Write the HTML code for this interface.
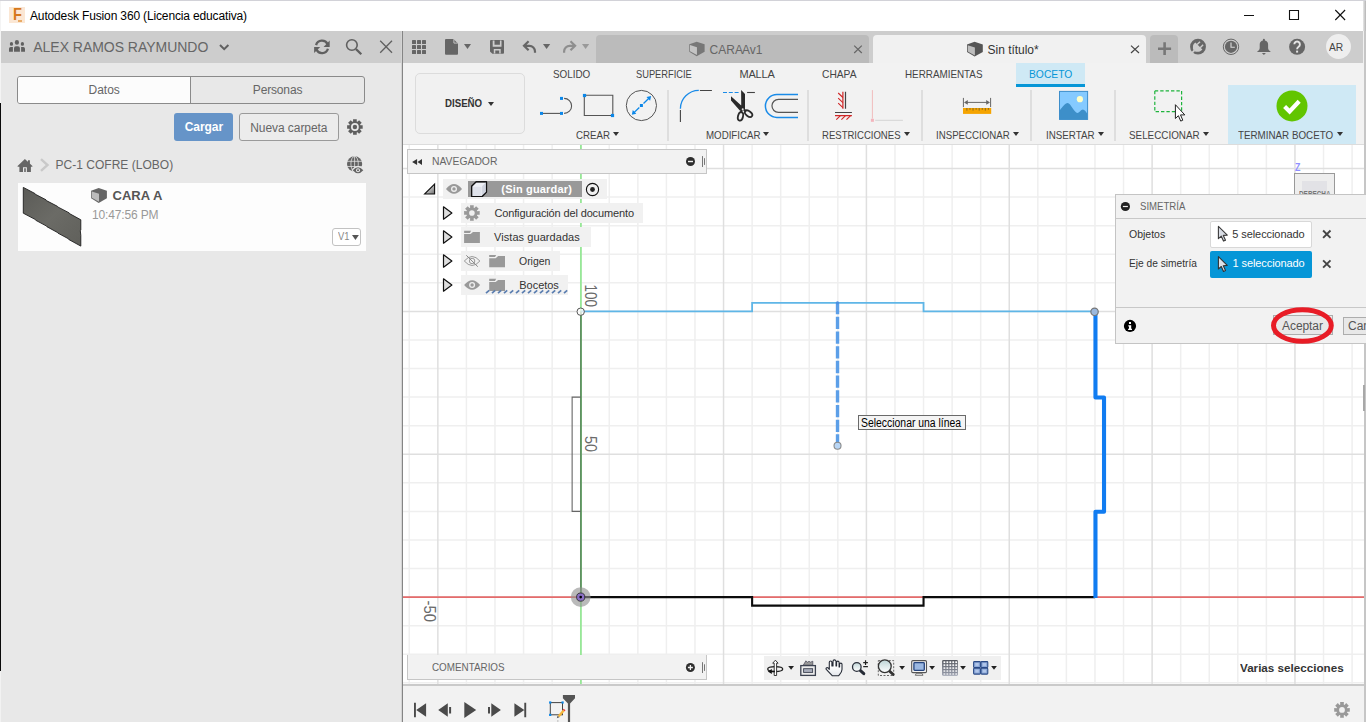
<!DOCTYPE html>
<html><head><meta charset="utf-8"><title>Autodesk Fusion 360 (Licencia educativa)</title>
<style>
*{box-sizing:border-box;margin:0;padding:0}
html,body{width:1366px;height:722px;overflow:hidden;background:#fff;font-family:"Liberation Sans",sans-serif;color:#444}
#root{position:relative;width:1366px;height:722px;overflow:hidden}
#root div,#root span,#root svg{position:absolute}
.t{white-space:nowrap;line-height:1}
#title{left:0;top:0;width:1366px;height:31px;background:#fff}
#lp{left:0;top:31px;width:402px;height:691px;background:#e8e8e8}
#lph{left:0;top:31px;width:402px;height:32px;background:#cdcdcd}
#vdiv{left:401px;top:31px;width:2px;height:691px;background:linear-gradient(90deg,#d4d4d4 50%,#858585 50%)}
#tb{left:403px;top:31px;width:963px;height:32px;background:#cdcdcd}
#rib{left:403px;top:63px;width:963px;height:82px;background:#f2f2f2;border-bottom:1px solid #dcdcdc}
#cv{left:403px;top:145px;width:963px;height:539px;background:#fff;overflow:hidden}
#tl{left:403px;top:684px;width:963px;height:38px;background:#f2f2f2;border-top:2px solid #cacaca}
.sep{width:2px;background:#dedede;top:89.5px;height:51px}
.navrow{background:#f1f1f1;height:20px}
</style></head><body>
<div id="root">
<div id="title"></div><span class="t" style="left:30.00px;top:10.34px;font-size:12px;color:#000;letter-spacing:-0.148px;">Autodesk Fusion 360 (Licencia educativa)</span><div id="lp"></div><div id="lph"></div><span class="t" style="left:33.30px;top:40.15px;font-size:14px;color:#666;letter-spacing:-0.031px;">ALEX RAMOS RAYMUNDO</span><div style="left:17px;top:76px;width:348px;height:28px;border:1px solid #8a8a8a;border-radius:3px;background:#e8e8e8"></div><div style="left:18px;top:77px;width:172px;height:26px;background:#fcfcfc;border-radius:2px 0 0 2px"></div><div style="left:190px;top:77px;width:1px;height:26px;background:#8a8a8a"></div><span class="t" style="left:88.50px;top:83.64px;font-size:12px;color:#666;">Datos</span><span class="t" style="left:252.80px;top:83.64px;font-size:12px;color:#666;letter-spacing:-0.156px;">Personas</span><div style="left:174px;top:113px;width:59px;height:28px;background:#6694c8;border-radius:3px"></div><span class="t" style="left:184.70px;top:121.14px;font-size:12px;color:#fff;font-weight:bold;letter-spacing:-0.057px;">Cargar</span><div style="left:239px;top:113px;width:100px;height:28px;background:#ececec;border:1px solid #9a9a9a;border-radius:3px"></div><span class="t" style="left:250.20px;top:121.84px;font-size:12px;color:#666;letter-spacing:-0.062px;">Nueva carpeta</span><span class="t" style="left:55.50px;top:158.64px;font-size:12px;color:#666;letter-spacing:0.022px;">PC-1 COFRE (LOBO)</span><div style="left:18px;top:183px;width:348px;height:68px;background:#fdfdfd"></div><span class="t" style="left:112.50px;top:188.50px;font-size:13px;color:#555;font-weight:bold;letter-spacing:0.042px;">CARA A</span><span class="t" style="left:92.00px;top:209.24px;font-size:12px;color:#999;letter-spacing:-0.144px;">10:47:56 PM</span><div style="left:332px;top:228px;width:29px;height:18px;background:#fff;border:1px solid #c2c2c2;border-radius:3px"></div><span class="t" style="left:337.60px;top:231.53px;font-size:10px;color:#888;transform:scaleX(0.9402);transform-origin:0 50%;">V1</span><div id="vdiv"></div><div id="tb"></div><div style="left:596px;top:35px;width:273px;height:28px;background:#bbb;border-radius:4px 4px 0 0"></div><div style="left:873px;top:35px;width:273px;height:28px;background:#f1f1f1;border-radius:4px 4px 0 0"></div><div style="left:1150px;top:35px;width:28px;height:28px;background:#bbb;border-radius:4px 4px 0 0"></div><span class="t" style="left:709.60px;top:44.34px;font-size:12px;color:#666;word-spacing:-2.9px;">CARA A v1</span><span class="t" style="left:987.60px;top:44.34px;font-size:12px;color:#333;letter-spacing:-0.036px;">Sin título*</span><div style="left:1325.6px;top:34.4px;width:25px;height:25px;border-radius:50%;background:#eeeeee"></div><span class="t" style="left:1328.90px;top:41.59px;font-size:11px;color:#444;transform:scaleX(0.9292);transform-origin:0 50%;">AR</span><div style="left:1363px;top:31px;width:1px;height:32px;background:#f0f0f0"></div><div id="rib"></div><div style="left:1016px;top:63px;width:69px;height:24px;background:#cfe9f5"></div><div style="left:1016px;top:84px;width:69px;height:3px;background:#0696d7"></div><div style="left:1228px;top:85px;width:128px;height:59px;background:#cfe9f5"></div><div style="left:415px;top:73px;width:110px;height:61px;border:1px solid #dcdcdc;border-radius:5px;background:#f1f1f1"></div><span class="t" style="left:445.40px;top:97.79px;font-size:11px;color:#333;font-weight:bold;transform:scaleX(0.8797);transform-origin:0 50%;">DISEÑO</span><span class="t" style="left:553.20px;top:68.69px;font-size:11px;color:#444;transform:scaleX(0.8974);transform-origin:0 50%;">SOLIDO</span><span class="t" style="left:636.00px;top:68.69px;font-size:11px;color:#444;transform:scaleX(0.8453);transform-origin:0 50%;">SUPERFICIE</span><span class="t" style="left:739.50px;top:68.69px;font-size:11px;color:#444;letter-spacing:-0.193px;">MALLA</span><span class="t" style="left:822.30px;top:68.69px;font-size:11px;color:#444;transform:scaleX(0.9303);transform-origin:0 50%;">CHAPA</span><span class="t" style="left:905.10px;top:68.69px;font-size:11px;color:#444;transform:scaleX(0.8951);transform-origin:0 50%;">HERRAMIENTAS</span><span class="t" style="left:1028.50px;top:68.69px;font-size:11px;color:#0696d7;transform:scaleX(0.9362);transform-origin:0 50%;">BOCETO</span><span class="t" style="left:575.60px;top:129.59px;font-size:11px;color:#444;transform:scaleX(0.8830);transform-origin:0 50%;">CREAR</span><svg style="left:612.8px;top:131.6px" width="6" height="4" viewBox="0 0 6 4"><path d="M0 0h6L3 4z" fill="#333"/></svg><span class="t" style="left:705.50px;top:129.59px;font-size:11px;color:#444;transform:scaleX(0.8830);transform-origin:0 50%;">MODIFICAR</span><svg style="left:763.2px;top:131.6px" width="6" height="4" viewBox="0 0 6 4"><path d="M0 0h6L3 4z" fill="#333"/></svg><span class="t" style="left:822.30px;top:129.59px;font-size:11px;color:#444;transform:scaleX(0.8678);transform-origin:0 50%;">RESTRICCIONES</span><svg style="left:904.0px;top:131.6px" width="6" height="4" viewBox="0 0 6 4"><path d="M0 0h6L3 4z" fill="#333"/></svg><span class="t" style="left:936.30px;top:129.59px;font-size:11px;color:#444;transform:scaleX(0.8801);transform-origin:0 50%;">INSPECCIONAR</span><svg style="left:1013.2px;top:131.6px" width="6" height="4" viewBox="0 0 6 4"><path d="M0 0h6L3 4z" fill="#333"/></svg><span class="t" style="left:1046.10px;top:129.59px;font-size:11px;color:#444;transform:scaleX(0.8901);transform-origin:0 50%;">INSERTAR</span><svg style="left:1097.9px;top:131.6px" width="6" height="4" viewBox="0 0 6 4"><path d="M0 0h6L3 4z" fill="#333"/></svg><span class="t" style="left:1129.20px;top:129.59px;font-size:11px;color:#444;transform:scaleX(0.8953);transform-origin:0 50%;">SELECCIONAR</span><svg style="left:1203.0px;top:131.6px" width="6" height="4" viewBox="0 0 6 4"><path d="M0 0h6L3 4z" fill="#333"/></svg><span class="t" style="left:1238.30px;top:129.59px;font-size:11px;color:#444;transform:scaleX(0.8909);transform-origin:0 50%;">TERMINAR BOCETO</span><svg style="left:1336.6px;top:131.6px" width="6" height="4" viewBox="0 0 6 4"><path d="M0 0h6L3 4z" fill="#333"/></svg><svg style="left:487.9px;top:101.6px" width="6" height="4" viewBox="0 0 6 4"><path d="M0 0h6L3 4z" fill="#333"/></svg><div class="sep" style="left:666.8px"></div><div class="sep" style="left:806.6px"></div><div class="sep" style="left:920.8px"></div><div class="sep" style="left:1029.8px"></div><div class="sep" style="left:1113.8px"></div><div id="cv"><svg style="left:0;top:-1px" width="963" height="542" viewBox="403 144 963 542"><path d="M380.71 144V686M409.28 144V686M466.42 144V686M494.99 144V686M523.56 144V686M552.13 144V686M609.27 144V686M637.84 144V686M666.41 144V686M694.98 144V686M752.12 144V686M780.69 144V686M809.26 144V686M837.83 144V686M894.97 144V686M923.54 144V686M952.11 144V686M980.68 144V686M1037.82 144V686M1066.39 144V686M1094.96 144V686M1123.53 144V686M1180.67 144V686M1209.24 144V686M1237.81 144V686M1266.38 144V686M1323.52 144V686M1352.09 144V686M403 139.98H1366M403 197.12H1366M403 225.69H1366M403 254.26H1366M403 282.83H1366M403 339.97H1366M403 368.54H1366M403 397.11H1366M403 425.68H1366M403 482.82H1366M403 511.39H1366M403 539.96H1366M403 568.53H1366M403 625.67H1366M403 654.24H1366M403 682.81H1366" stroke="#efefef" stroke-width="1.5" fill="none"/><path d="M437.85 144V686M580.7 144V686M723.55 144V686M866.4 144V686M1009.25 144V686M1152.1 144V686M1294.95 144V686M403 168.55H1366M403 311.4H1366M403 454.25H1366M403 597.1H1366" stroke="#dfdfdf" stroke-width="1.5" fill="none"/><path d="M403 597.1H1364" stroke="#e56b6b" stroke-width="1.7" fill="none"/><path d="M580.9000000000001 144V686" stroke="#97e897" stroke-width="1.8" fill="none"/><path d="M580.7 311.4H752.1200000000001V302.829H923.5400000000001V311.4H1094.96" stroke="#5fb6e7" stroke-width="1.8" fill="none"/><path d="M580.9000000000001 311.4V597.1" stroke="#5f9161" stroke-width="1.8" fill="none"/><path d="M580.7 397.11H572.129V511.39H580.7" stroke="#666" stroke-width="1.1" fill="none"/><path d="M580.7 597.1H752.1200000000001V605.671H923.5400000000001V597.1H1094.96" stroke="#0c0c0c" stroke-width="2.1" fill="none" stroke-linejoin="miter"/><path d="M1095.46 311.4V397.51H1104.031V511.78999999999996H1095.46V598.1" stroke="#117cf1" stroke-width="4.1" fill="none" stroke-linejoin="round"/><path d="M837.5300000000001 302.029V445.679" stroke="#5c9fe8" stroke-width="3.4" fill="none" stroke-dasharray="12.3 2.4" stroke-linecap="butt"/><circle cx="837.5300000000001" cy="302.829" r="1.7" fill="#4a90e2"/><circle cx="837.5300000000001" cy="445.7" r="3.5" fill="#b9d6f5" stroke="#8a8a8a" stroke-width="1.1"/><circle cx="580.7" cy="311.7" r="3.7" fill="#fff" fill-opacity="0.75" stroke="#555" stroke-width="1"/><circle cx="1094.56" cy="311.79999999999995" r="3.7" fill="#9bb8dd" stroke="#777" stroke-width="1.2"/><circle cx="580.7" cy="597.1" r="9.9" fill="#8f8f8f" fill-opacity="0.62"/><circle cx="580.7" cy="597.1" r="4.1" fill="#8a6fc4" stroke="#222" stroke-width="0.8"/><circle cx="580.7" cy="597.1" r="1.3" fill="#000"/><text transform="translate(585.3,284.6) rotate(90)" font-size="16.5" fill="#6a6a6a" textLength="22.4" lengthAdjust="spacingAndGlyphs" style="font-family:'Liberation Sans',sans-serif">100</text><text transform="translate(585,435.9) rotate(90)" font-size="16.5" fill="#6a6a6a" textLength="16" lengthAdjust="spacingAndGlyphs" style="font-family:'Liberation Sans',sans-serif">50</text><text transform="translate(423.6,600.6) rotate(90)" font-size="16.5" fill="#6a6a6a" textLength="21.4" lengthAdjust="spacingAndGlyphs" style="font-family:'Liberation Sans',sans-serif">-50</text></svg><div style="left:-403px;top:-145px;width:1366px;height:722px"><div style="left:407px;top:149px;width:300px;height:25px;background:#f2f2f2;border:1px solid #c6c6c6"></div><span class="t" style="left:432.40px;top:155.59px;font-size:11px;color:#666;transform:scaleX(0.9413);transform-origin:0 50%;">NAVEGADOR</span><div class="navrow" style="left:443px;top:179px;width:164px"></div><div style="left:468px;top:181px;width:114px;height:16px;background:#999"></div><span class="t" style="left:501.30px;top:183.79px;font-size:11px;color:#fff;font-weight:bold;letter-spacing:0.180px;">(Sin guardar)</span><div class="navrow" style="left:461px;top:203px;width:182px"></div><span class="t" style="left:494.40px;top:207.59px;font-size:11px;color:#333;letter-spacing:-0.134px;">Configuración del documento</span><div class="navrow" style="left:461px;top:227px;width:130px"></div><span class="t" style="left:494.00px;top:231.59px;font-size:11px;color:#333;letter-spacing:0.067px;">Vistas guardadas</span><div class="navrow" style="left:461px;top:251px;width:99px"></div><span class="t" style="left:519.30px;top:255.59px;font-size:11px;color:#333;transform:scaleX(0.9511);transform-origin:0 50%;">Origen</span><div class="navrow" style="left:461px;top:275px;width:107px"></div><span class="t" style="left:519.30px;top:279.59px;font-size:11px;color:#333;letter-spacing:-0.041px;">Bocetos</span><div style="left:407px;top:655px;width:300px;height:25px;background:#f2f2f2;border:1px solid #c6c6c6;border-top:none"></div><span class="t" style="left:432.30px;top:661.89px;font-size:11px;color:#666;transform:scaleX(0.8954);transform-origin:0 50%;">COMENTARIOS</span><div style="left:764px;top:656px;width:237px;height:24px;background:#f0f0f0"></div><span class="t" style="left:1239.60px;top:662.69px;font-size:11px;color:#333;font-weight:bold;transform:scaleX(1.0588);transform-origin:0 50%;">Varias selecciones</span><div style="left:858px;top:415px;width:108px;height:15px;background:#f4f4f4;border:1px solid #6a6a6a"></div><span class="t" style="left:861.20px;top:416.54px;font-size:12px;color:#000;transform:scaleX(0.8674);transform-origin:0 50%;">Seleccionar una línea</span><div style="left:1294px;top:173px;width:41px;height:30px;background:#eee;border:1px solid #999"></div><div style="left:1302px;top:181px;width:25px;height:20px;background:#e2e2e6"></div><span class="t" style="left:1298.80px;top:189.98px;font-size:9px;color:#777;font-weight:bold;transform:scaleX(0.7100);transform-origin:0 50%;">DERECHA</span><span class="t" style="left:1295.40px;top:162.11px;font-size:10.5px;color:#8f8fff;font-weight:bold;transform:scaleX(0.85);transform-origin:0 50%;">Z</span><div style="left:1115px;top:194px;width:260px;height:150px;background:#f2f2f2;border:1px solid #c4c4c4"></div><div style="left:1116px;top:218px;width:250px;height:1px;background:#c8c8c8"></div><div style="left:1116px;top:307px;width:250px;height:1px;background:#c8c8c8"></div><span class="t" style="left:1140.30px;top:200.69px;font-size:11px;color:#666;transform:scaleX(0.8720);transform-origin:0 50%;">SIMETRÍA</span><span class="t" style="left:1128.50px;top:228.69px;font-size:11px;color:#333;transform:scaleX(0.9550);transform-origin:0 50%;">Objetos</span><span class="t" style="left:1128.50px;top:258.49px;font-size:11px;color:#333;transform:scaleX(0.9256);transform-origin:0 50%;">Eje de simetría</span><div style="left:1210px;top:220.5px;width:102px;height:27px;background:#fff;border:1px solid #d8d8d8;border-radius:2px"></div><div style="left:1210.3px;top:250.5px;width:101.4px;height:27px;background:#0696d7;border-radius:2px"></div><span class="t" style="left:1232.20px;top:228.69px;font-size:11px;color:#333;letter-spacing:-0.068px;">5 seleccionado</span><span class="t" style="left:1232.60px;top:258.49px;font-size:11px;color:#fff;letter-spacing:-0.098px;">1 seleccionado</span><div style="left:1273px;top:315px;width:60px;height:20px;background:#e8e8e8;border:1px solid #adadad"></div><span class="t" style="left:1282.10px;top:319.64px;font-size:12px;color:#555;letter-spacing:-0.092px;">Aceptar</span><div style="left:1343px;top:317px;width:60px;height:18px;background:#e8e8e8;border:1px solid #adadad"></div><span class="t" style="left:1348.00px;top:319.64px;font-size:12px;color:#555;">Cancelar</span><svg style="left:1266px;top:302px" width="74" height="48" viewBox="1266 302 74 48"><ellipse cx="1302.4" cy="325.5" rx="28.9" ry="15.8" fill="none" stroke="#e81c26" stroke-width="5"/></svg></div></div><div id="tl"></div><div style="left:9px;top:7px;width:16px;height:16px;background:#fbe7d4"></div><span class="t" style="left:12.80px;top:5.63px;font-size:16.5px;color:#d6781c;font-weight:bold;transform:scaleX(0.88);transform-origin:0 50%;">F</span><div style="left:18px;top:20px;width:4px;height:1.5px;background:#e9ab66"></div><svg style="left:1240px;top:5px" width="110" height="20" viewBox="1240 5 110 20"><path d="M1244 15.5h10M1289.5 10.5h9v9h-9zM1335.3 10l9.8 10M1345.1 10l-9.8 10" stroke="#111" stroke-width="1.1" fill="none"/></svg><div style="left:0;top:0;width:1366px;height:1px;background:#d2d2d8"></div><div style="left:0;top:1px;width:1px;height:102px;background:#f4f4f4"></div><svg style="left:8px;top:39px" width="18" height="14" viewBox="8 39 18 14"><g fill="#606060"><ellipse cx="16.9" cy="42.400" rx="2.100" ry="2.350"/><path d="M14 51.8v-3.6a2 2 0 0 1 2-2h1.9a2 2 0 0 1 2 2v3.6z"/><ellipse cx="11.450" cy="43.900" rx="1.650" ry="1.900"/><path d="M9 51.8v-3.1a1.7 1.7 0 0 1 1.7-1.7h2.2v4.8z"/><ellipse cx="22.400" cy="43.900" rx="1.650" ry="1.900"/><path d="M25 51.8v-3.1a1.7 1.7 0 0 0-1.7-1.7h-2.2v4.8z"/></g></svg><svg style="left:218px;top:43px" width="12" height="8" viewBox="218 43 12 8"><path d="M220 45l4.2 4.2 4.2-4.2" stroke="#606060" stroke-width="2" fill="none"/></svg><svg style="left:313px;top:39px" width="18" height="16" viewBox="313 39 18 16"><g fill="none" stroke="#606060" stroke-width="2.3"><path d="M316.070 45.090A6.200 6.200 0 0 1 327.600 44.200"/><path d="M327.930 48.710A6.200 6.200 0 0 1 316.400 49.600"/></g><g fill="#606060"><path d="M329.700 40.600v6.300h-6.100z"/><path d="M314.100 53.100v-6h6.100z"/></g></svg><svg style="left:345px;top:38px" width="18" height="18" viewBox="345 38 18 18"><circle cx="351.9" cy="45" r="5.3" fill="none" stroke="#606060" stroke-width="1.6"/><path d="M356 49.1l5.3 5.2" stroke="#606060" stroke-width="2.2"/></svg><svg style="left:379px;top:40px" width="14" height="14" viewBox="379 40 14 14"><path d="M380.2 40.8l11.8 12M392 40.8l-11.8 12" stroke="#606060" stroke-width="1.3"/></svg><svg style="left:346px;top:118px" width="18" height="18" viewBox="346 118 18 18"><path d="M360.41 125.19L362.68 125.13L362.68 128.87L360.41 128.81L360.08 129.61L361.72 131.18L359.08 133.82L357.51 132.18L356.71 132.51L356.77 134.78L353.03 134.78L353.09 132.51L352.29 132.18L350.72 133.82L348.08 131.18L349.72 129.61L349.39 128.81L347.12 128.87L347.12 125.13L349.39 125.19L349.72 124.39L348.08 122.82L350.72 120.18L352.29 121.82L353.09 121.49L353.03 119.22L356.77 119.22L356.71 121.49L357.51 121.82L359.08 120.18L361.72 122.82L360.08 124.39z" fill="#5e5e5e"/><circle cx="354.9" cy="127" r="3.9" fill="#e8e8e8"/><circle cx="354.9" cy="127" r="2.2" fill="#5e5e5e"/></svg><svg style="left:346px;top:155px" width="19" height="20" viewBox="346 155 19 20"><circle cx="354.6" cy="163.9" r="7.6" fill="#636363"/><g stroke="#e8e8e8" stroke-width="0.75" fill="none"><path d="M347 161.300h15.200M347 166.500h15.200M354.600 156.300v15.200"/><ellipse cx="354.600" cy="163.900" rx="3.700" ry="7.600"/></g><path d="M351.500 170.200q6.500-8.200 13 0q-6.500 8.200-13 0z" fill="#e8e8e8"/><path d="M352.700 170.200q5.300-6 10.600 0q-5.300 6-10.600 0z" fill="#636363"/><circle cx="358" cy="170.200" r="2" fill="#e8e8e8"/><circle cx="358" cy="170.200" r="1" fill="#636363"/></svg><svg style="left:17px;top:158px" width="16" height="15" viewBox="17 158 16 15"><path d="M24.9 158.9l7.5 7.2v0.6h-1.5v5.2h-4v-4.6h-3.9v4.6h-3.6v-5.2h-1.8v-0.6z" fill="#666"/><path d="M28 160.2h1.9v4.2l-1.9-1.8z" fill="#666"/><path d="M24.2 168.3h1.6v3.6h-1.6z" fill="#666"/></svg><svg style="left:39px;top:157px" width="11" height="16" viewBox="39 157 11 16"><path d="M41 159.1l6.5 5.9-6.5 5.9" stroke="#c9c9c9" stroke-width="2.4" fill="none"/></svg><svg style="left:20px;top:185px" width="64" height="64" viewBox="20 185 64 64"><defs><linearGradient id="tg" x1="0" y1="0" x2="1" y2="1"><stop offset="0" stop-color="#5b5b57"/><stop offset="0.5" stop-color="#6b6b66"/><stop offset="1" stop-color="#60605b"/></linearGradient></defs><path d="M23.3 187.4l11.6 6.1 0.3 0.7 10.8 5.6 0.4 0.8 11 5.7 0.3 0.6 11.5 6 0.3 0.7 11.3 6.2v10.3l-0.5 0.6 0.5 4.6v10.8l-12-6.6-0.3-0.7-10.6-5.7-0.4-0.6-10.6-5.8-0.3-0.6-10.8-5.8-0.3-0.7-12.2-6.4z" fill="url(#tg)" stroke="#1e1e1e" stroke-width="0.9"/></svg><svg style="left:90px;top:187px" width="18" height="17" viewBox="90 187 18 17"><path d="M91.10 190.70L98.70 188.10L106.90 190.70L106.90 198.30L98.70 202.90L91.10 198.30z" fill="#666"/><path d="M91.80 191.50L99.00 193.70L99.00 201.80L91.80 197.80z" fill="#bcbcbc"/></svg><svg style="left:351px;top:234px" width="9" height="7" viewBox="351 234 9 7"><path d="M352 235h6.900l-3.450 4.900z" fill="#555"/></svg><svg style="left:688px;top:40px" width="18" height="17" viewBox="688 40 18 17"><path d="M689.29 44.32L696.66 41.80L704.61 44.32L704.61 51.69L696.66 56.16L689.29 51.69z" fill="#777"/><path d="M689.97 45.10L696.95 47.23L696.95 55.09L689.97 51.21z" fill="#c4c4c4"/></svg><svg style="left:966px;top:40px" width="18" height="17" viewBox="966 40 18 17"><path d="M967.00 44.40L974.60 41.80L982.80 44.40L982.80 52.00L974.60 56.60L967.00 52.00z" fill="#555"/><path d="M967.70 45.20L974.90 47.40L974.90 55.50L967.70 51.50z" fill="#bdbdbd"/></svg><svg style="left:853px;top:44px" width="10" height="10" viewBox="853 44 10 10"><path d="M854.2 45.6l7.6 7.4M861.8 45.6l-7.6 7.4" stroke="#666" stroke-width="1.2"/></svg><svg style="left:1130px;top:44px" width="10" height="10" viewBox="1130 44 10 10"><path d="M1131 45.6l8 7.4M1139 45.6l-8 7.4" stroke="#444" stroke-width="1.2"/></svg><svg style="left:1157px;top:41px" width="15" height="15" viewBox="1157 41 15 15"><path d="M1164.6 42.2v12.9M1158 48.7h13.1" stroke="#777" stroke-width="2.6"/></svg><svg style="left:411px;top:39px" width="16" height="16" viewBox="411 39 16 16"><rect x="412" y="40" width="4" height="4" rx="0.6" fill="#666"/><rect x="412" y="45" width="4" height="4" rx="0.6" fill="#666"/><rect x="412" y="50" width="4" height="4" rx="0.6" fill="#666"/><rect x="417" y="40" width="4" height="4" rx="0.6" fill="#666"/><rect x="417" y="45" width="4" height="4" rx="0.6" fill="#666"/><rect x="417" y="50" width="4" height="4" rx="0.6" fill="#666"/><rect x="422" y="40" width="4" height="4" rx="0.6" fill="#666"/><rect x="422" y="45" width="4" height="4" rx="0.6" fill="#666"/><rect x="422" y="50" width="4" height="4" rx="0.6" fill="#666"/></svg><svg style="left:444px;top:38px" width="15" height="18" viewBox="444 38 15 18"><path d="M446 39h7.4l4.6 4.6v10.2a1 1 0 0 1-1 1h-11a1 1 0 0 1-1-1v-13.8a1 1 0 0 1 1-1z" fill="#666"/><path d="M453.9 39.2v3.9h3.9" fill="none" stroke="#cdcdcd" stroke-width="0.9"/></svg><svg style="left:464px;top:44px" width="9" height="7" viewBox="464 44 9 7"><path d="M464 44h7l-3.5 5z" fill="#666"/></svg><svg style="left:489px;top:39px" width="16" height="16" viewBox="489 39 16 16"><path d="M491 40h12a1 1 0 0 1 1 1v11.8a1 1 0 0 1-1 1h-10.6l-2.4-2.4v-10.4a1 1 0 0 1 1-1z" fill="#666"/><path d="M492.7 40.4v6.3h8.8v-6.3h-1.6v4.4h-5.4v-4.4zM493.8 53.4v-4.4h6.9v4.4h-1.5v-3h-3.9v3z" fill="#cdcdcd"/></svg><svg style="left:521px;top:39px" width="16" height="16" viewBox="521 39 16 16"><path d="M528.6 41.3l-4.6 4.5 4.6 4.5M524.2 45.8h5.2a5.6 5.6 0 0 1 5.6 5.6v1.4" fill="none" stroke="#666" stroke-width="2.2"/></svg><svg style="left:543px;top:44px" width="10" height="7" viewBox="543 44 10 7"><path d="M543 44h7.2l-3.6 5z" fill="#666"/></svg><svg style="left:562px;top:39px" width="16" height="16" viewBox="562 39 16 16"><path d="M570.5 41.3l4.6 4.5-4.6 4.5M574.9 45.8h-5.2a5.6 5.6 0 0 0-5.6 5.6v1.4" fill="none" stroke="#8e8e8e" stroke-width="2.2"/></svg><svg style="left:582px;top:44px" width="10" height="7" viewBox="582 44 10 7"><path d="M582 44h7.2l-3.6 5z" fill="#999"/></svg><svg style="left:1189px;top:38px" width="18" height="18" viewBox="1189 38 18 18"><circle cx="1198" cy="46.700" r="7.900" fill="#666"/><g transform="translate(1197.300 47.500) rotate(45) scale(1.18)" fill="#cdcdcd"><path d="M-4.200 -1.900h8.400v1.700q0 1.200-0.900 2.100l-1.700 1.700h-3.200l-1.700-1.700q-0.900-0.900-0.900-2.100z"/><rect x="-2.500" y="-5.100" width="1.200" height="3.500"/><rect x="1.300" y="-5.100" width="1.200" height="3.500"/><rect x="-0.800" y="3.200" width="1.600" height="6.500"/></g></svg><svg style="left:1222px;top:38px" width="18" height="18" viewBox="1222 38 18 18"><circle cx="1231" cy="46.8" r="7.7" fill="none" stroke="#666" stroke-width="1"/><circle cx="1231" cy="46.8" r="6.1" fill="#666"/><path d="M1231 42.6v4.6h3.8" fill="none" stroke="#dcdcdc" stroke-width="1.1"/></svg><svg style="left:1256px;top:38px" width="16" height="18" viewBox="1256 38 16 18"><path d="M1263.9 38.8a1 1 0 0 1 1 1v0.7a4.2 4.2 0 0 1 3.2 4.1v3.4c0 1.6 0.9 2.7 2.4 3.4v0.5h-13.2v-0.5c1.5-0.7 2.4-1.800 2.400-3.400v-3.400a4.200 4.200 0 0 1 3.200-4.100v-0.700a1 1 0 0 1 1-1z" fill="#666"/><path d="M1261.9 53.100h4l-2 1.900z" fill="#666"/></svg><svg style="left:1288px;top:38px" width="18" height="18" viewBox="1288 38 18 18"><circle cx="1297.1" cy="46.800" r="8" fill="#666"/><path d="M1294.300 44.300a2.800 2.800 0 1 1 4.300 2.400c-1 0.700-1.500 1.200-1.500 2.500" fill="none" stroke="#e4e4e4" stroke-width="1.900"/><rect x="1296.100" y="50.600" width="2" height="2" fill="#e4e4e4"/></svg><svg style="left:539px;top:94px" width="36" height="24" viewBox="539 94 36 24"><path d="M543 113.400h17" stroke="#555" stroke-width="1.100" fill="none"/><path d="M564.100 98.400a7.500 7.500 0 0 1 0 15" stroke="#555" stroke-width="1.100" fill="none"/><rect x="540.0" y="111.9" width="3" height="3" fill="#0c87e8"/><rect x="560.0" y="111.9" width="3" height="3" fill="#0c87e8"/><rect x="560.0" y="96.9" width="3" height="3" fill="#0c87e8"/></svg><svg style="left:582px;top:93px" width="34" height="26" viewBox="582 93 34 26"><path d="M584.300 95.300h28.500v20.200h-28.500z" stroke="#555" stroke-width="1.100" fill="none"/><rect x="582.9" y="93.9" width="3.2" height="3.2" fill="#0c87e8"/><rect x="610.9" y="113.9" width="3.2" height="3.2" fill="#0c87e8"/></svg><svg style="left:625px;top:89px" width="33" height="33" viewBox="625 89 33 33"><circle cx="641.400" cy="105.500" r="15.100" stroke="#555" stroke-width="1" fill="none"/><path d="M634 112.600l5.300-5.100M643.500 103.500l5.400-5.200" stroke="#0c87e8" stroke-width="1.300"/><path d="M651.100 96.100l-1 4.700-3.600-3.700zM631.800 114.700l1-4.600 3.500 3.600z" fill="#0c87e8"/><rect x="639.9" y="104.0" width="3" height="3" fill="#0c87e8"/></svg><svg style="left:678px;top:88px" width="36" height="36" viewBox="678 88 36 36"><path d="M680.400 108.800a18.500 18.500 0 0 1 18.400-18.400" stroke="#1a8be8" stroke-width="1.300" fill="none"/><path d="M699.900 90.500h12M680.400 110v12" stroke="#444" stroke-width="1.100" fill="none"/></svg><svg style="left:721px;top:88px" width="36" height="36" viewBox="721 88 36 36"><path d="M723 92.500h16" stroke="#1a8be8" stroke-width="1.200" stroke-dasharray="4 1.800" fill="none"/><path d="M747.100 92.500h7.800" stroke="#444" stroke-width="1.100"/><path d="M741.100 90.100l3.900 4v15.200l-3.700 1.400zM731 96.200l10.500 9.600v4.600l-1.700 0.200-8.800-10z" fill="#2a2a2a"/><path d="M741.600 109.500l-0.600 3.500M743.800 109.600l2.200 1.600" stroke="#2a2a2a" stroke-width="2.200"/><ellipse cx="740.500" cy="116.400" rx="2.500" ry="4.300" transform="rotate(14 740.500 116.400)" fill="none" stroke="#2a2a2a" stroke-width="1.800"/><ellipse cx="748.600" cy="113.700" rx="2.500" ry="4.200" transform="rotate(-52 748.600 113.700)" fill="none" stroke="#2a2a2a" stroke-width="1.800"/><circle cx="742.700" cy="109.200" r="1" fill="#e8e8e8"/></svg><svg style="left:764px;top:92px" width="35" height="28" viewBox="764 92 35 28"><path d="M798 94.600h-21.200a11.400 11.400 0 0 0 0 22.800h21.200" stroke="#1a8be8" stroke-width="1.500" fill="none"/><path d="M798 99.300h-19.500a6.550 6.550 0 0 0 0 13.100h19.500" stroke="#555" stroke-width="1.200" fill="none"/></svg><svg style="left:834px;top:90px" width="19" height="31" viewBox="834 90 19 31"><path d="M845.500 91.800v17M835 112.500h16.900" stroke="#444" stroke-width="1.200" fill="none"/><path d="M842.900 91.800v17M835 115.700h16.900" stroke="#d02626" stroke-width="1.200" fill="none"/><path d="M838.200 93l4.700 4.500M838.200 98.100l4.700 4.500M838.200 103.200l4.700 4.500M840.400 115.700l-4.100 3.900M845.500 115.700l-4.100 3.900M850.600 115.700l-4.100 3.900" stroke="#d02626" stroke-width="1.100" fill="none"/></svg><svg style="left:870px;top:89px" width="34" height="34" viewBox="870 89 34 34"><path d="M872.400 90.100v28.500" stroke="#f1bcbc" stroke-width="1"/><path d="M875.200 120.300h27.700" stroke="#d4d4d4" stroke-width="1"/><rect x="870.9" y="118.8" width="3" height="3" fill="#f3b4bc"/></svg><svg style="left:962px;top:96px" width="31" height="19" viewBox="962 96 31 19"><path d="M963.400 97.900v9.200M990.600 97.900v9.200M965.500 102.400h23" stroke="#666" stroke-width="1" fill="none"/><path d="M964 102.400l3.800-2.300v4.600zM990 102.400l-3.800-2.300v4.600z" fill="#666"/><rect x="963" y="108" width="28.200" height="5.900" fill="#f5a400"/><path d="M966.90 108v2.6" stroke="#6b5a2a" stroke-width="0.800"/><path d="M969.97 108v1.8" stroke="#6b5a2a" stroke-width="0.800"/><path d="M973.04 108v2.6" stroke="#6b5a2a" stroke-width="0.800"/><path d="M976.11 108v1.8" stroke="#6b5a2a" stroke-width="0.800"/><path d="M979.18 108v2.6" stroke="#6b5a2a" stroke-width="0.800"/><path d="M982.25 108v1.8" stroke="#6b5a2a" stroke-width="0.800"/><path d="M985.32 108v2.6" stroke="#6b5a2a" stroke-width="0.800"/><path d="M988.39 108v1.8" stroke="#6b5a2a" stroke-width="0.800"/></svg><svg style="left:1058px;top:90px" width="31" height="31" viewBox="1058 90 31 31"><rect x="1059.500" y="91.400" width="28.100" height="28" fill="#85caff" stroke="#3d8ecb" stroke-width="1"/><path d="M1060 110c2.500-3 5-7 7.600-7 3.200 0 6.500 9.900 9.900 9.900 2 0 3.400-3.300 5.400-3.300 1.500 0 3 2.300 4.200 3.900v5.900h-27.100z" fill="#3d8fc9"/><circle cx="1079.900" cy="99.200" r="3.100" fill="#ffffc8"/></svg><svg style="left:1153px;top:89px" width="35" height="34" viewBox="1153 89 35 34"><rect x="1154.800" y="90.900" width="26.800" height="20.800" fill="none" stroke="#1eb43c" stroke-width="1.200" stroke-dasharray="3.400 2"/><path d="M1175.400 104.700v13.800l3-2.800 2.300 5.400 2.100-0.900-2.300-5.300h4.300z" fill="#fff" stroke="#222" stroke-width="1"/></svg><svg style="left:1276px;top:90px" width="32" height="32" viewBox="1276 90 32 32"><circle cx="1292" cy="105.900" r="15.500" fill="#62c500"/><path d="M1284.600 106.400l5 5 9.600-10.200" fill="none" stroke="#fff" stroke-width="4.200"/></svg><svg style="left:411px;top:158px" width="12" height="8" viewBox="411 158 12 8"><path d="M417.100 159v5.900l-5-2.950zM422 159v5.900l-4.500-2.950z" fill="#333"/></svg><svg style="left:685px;top:156px" width="22" height="12" viewBox="685 156 22 12"><circle cx="690.500" cy="161.500" r="4.500" fill="#2e2e2e"/><path d="M688 161.500h5" stroke="#f2f2f2" stroke-width="1.400"/><path d="M702.500 156.100v10.900" stroke="#777" stroke-width="1"/><path d="M704.500 158.200v6.700" stroke="#777" stroke-width="1"/></svg><svg style="left:422px;top:182px" width="14" height="14" viewBox="422 182 14 14"><defs><linearGradient id="trg" x1="0" y1="0" x2="1" y2="1"><stop offset="0.300" stop-color="#e0e0e0"/><stop offset="1" stop-color="#6a6a6a"/></linearGradient></defs><path d="M434.600 184v10h-10z" fill="url(#trg)" stroke="#111" stroke-width="1.100" stroke-linejoin="miter"/></svg><svg style="left:445px;top:183px" width="18" height="12" viewBox="445 183 18 12"><path d="M446 188.9q8-9.600 16 0q-8 9.600-16 0z" fill="#999"/><circle cx="454" cy="188.9" r="3" fill="#efefef"/><circle cx="454" cy="188.9" r="1.700" fill="#999"/></svg><svg style="left:470px;top:180px" width="18" height="18" viewBox="470 180 18 18"><path d="M471.700 186.200l4.400-4.400h10.400v10.300l-4.400 4.400h-10.400z" fill="#eef0f5" stroke="#111" stroke-width="1.200" stroke-linejoin="round"/><path d="M482.100 186.200l4.400-4.400v10.300l-4.400 4.400z" fill="#cfd3de"/><rect x="472.300" y="186.800" width="9.300" height="9.200" fill="#dfe2ea"/><path d="M471.700 186.200l4.400-4.400h10.400v10.300l-4.400 4.400h-10.400z" fill="none" stroke="#111" stroke-width="1.100" stroke-linejoin="round"/></svg><svg style="left:585px;top:182px" width="15" height="15" viewBox="585 182 15 15"><circle cx="592.500" cy="189.500" r="6.100" fill="none" stroke="#111" stroke-width="1.100"/><circle cx="592.500" cy="189.500" r="2.400" fill="#222"/></svg><svg style="left:442px;top:205.2px" width="12" height="16" viewBox="442 205.2 12 16"><path d="M443.500 207.0v12.400l8.400-6.200z" fill="#dedede" stroke="#111" stroke-width="1.200" stroke-linejoin="round"/></svg><svg style="left:442px;top:229.2px" width="12" height="16" viewBox="442 229.2 12 16"><path d="M443.500 231.0v12.400l8.400-6.200z" fill="#dedede" stroke="#111" stroke-width="1.200" stroke-linejoin="round"/></svg><svg style="left:442px;top:253.2px" width="12" height="16" viewBox="442 253.2 12 16"><path d="M443.500 255.0v12.400l8.400-6.200z" fill="#dedede" stroke="#111" stroke-width="1.200" stroke-linejoin="round"/></svg><svg style="left:442px;top:277.2px" width="12" height="16" viewBox="442 277.2 12 16"><path d="M443.500 279.0v12.400l8.400-6.200z" fill="#dedede" stroke="#111" stroke-width="1.200" stroke-linejoin="round"/></svg><svg style="left:463px;top:204px" width="18" height="18" viewBox="463 204 18 18"><path d="M477.22 211.20L479.68 211.08L479.68 214.82L477.22 214.70L476.90 215.47L478.72 217.13L476.08 219.77L474.42 217.95L473.65 218.27L473.77 220.73L470.03 220.73L470.15 218.27L469.38 217.95L467.72 219.77L465.08 217.13L466.90 215.47L466.58 214.70L464.12 214.82L464.12 211.08L466.58 211.20L466.90 210.43L465.08 208.77L467.72 206.13L469.38 207.95L470.15 207.63L470.03 205.17L473.77 205.17L473.65 207.63L474.42 207.95L476.08 206.13L478.72 208.77L476.90 210.43z" fill="#999"/><circle cx="471.9" cy="212.95" r="2.8" fill="#efefef"/></svg><svg style="left:464px;top:230px" width="17" height="14" viewBox="464 230 17 14"><path d="M464.1 230.8h7l-1.200 2.100h-5.800z" fill="#999"/><path d="M464.1 234.1h6.500l2.400-2.200h6.900v11.200h-15.800z" fill="#999"/></svg><svg style="left:489px;top:254px" width="17" height="14" viewBox="489 254 17 14"><path d="M489.2 254.9h7l-1.200 2.100h-5.800z" fill="#999"/><path d="M489.2 258.2h6.500l2.400-2.200h6.900v11.200h-15.800z" fill="#999"/></svg><svg style="left:489px;top:278px" width="17" height="14" viewBox="489 278 17 14"><path d="M489.2 278.8h7l-1.200 2.100h-5.800z" fill="#999"/><path d="M489.2 282.1h6.500l2.400-2.200h6.900v11.200h-15.800z" fill="#999"/></svg><svg style="left:463px;top:254px" width="18" height="14" viewBox="463 254 18 14"><path d="M464.300 261q7.800-9 15.600 0q-7.800 9-15.600 0z" fill="none" stroke="#999" stroke-width="1"/><circle cx="472.100" cy="261" r="2.700" fill="none" stroke="#999" stroke-width="1"/><path d="M466.300 255.300l11.500 11.400" stroke="#888" stroke-width="1"/></svg><svg style="left:463px;top:279px" width="18" height="12" viewBox="463 279 18 12"><path d="M464.1 285q8-9.600 16 0q-8 9.600-16 0z" fill="#999"/><circle cx="472.1" cy="285" r="3" fill="#efefef"/><circle cx="472.1" cy="285" r="1.700" fill="#999"/></svg><svg style="left:485px;top:289px" width="84" height="6" viewBox="485 289 84 6"><path d="M486.0 293.100l3.200-2.700" stroke="#5a7db0" stroke-width="1.700"/><path d="M492.0 293.100l3.200-2.700" stroke="#5a7db0" stroke-width="1.700"/><path d="M498.0 293.100l3.200-2.700" stroke="#5a7db0" stroke-width="1.700"/><path d="M504.0 293.100l3.200-2.700" stroke="#5a7db0" stroke-width="1.700"/><path d="M510.0 293.100l3.200-2.700" stroke="#5a7db0" stroke-width="1.700"/><path d="M516.0 293.100l3.200-2.700" stroke="#5a7db0" stroke-width="1.700"/><path d="M522.0 293.100l3.200-2.700" stroke="#5a7db0" stroke-width="1.700"/><path d="M528.0 293.100l3.200-2.700" stroke="#5a7db0" stroke-width="1.700"/><path d="M534.0 293.100l3.200-2.700" stroke="#5a7db0" stroke-width="1.700"/><path d="M540.0 293.100l3.200-2.700" stroke="#5a7db0" stroke-width="1.700"/><path d="M546.0 293.100l3.200-2.700" stroke="#5a7db0" stroke-width="1.700"/><path d="M552.0 293.100l3.200-2.700" stroke="#5a7db0" stroke-width="1.700"/><path d="M558.0 293.100l3.200-2.700" stroke="#5a7db0" stroke-width="1.700"/><path d="M564.0 293.100l3.200-2.700" stroke="#5a7db0" stroke-width="1.700"/></svg><svg style="left:685px;top:662px" width="22" height="12" viewBox="685 662 22 12"><circle cx="690.400" cy="667.500" r="4.500" fill="#2e2e2e"/><path d="M687.900 667.500h5M690.400 665v5" stroke="#f2f2f2" stroke-width="1.300"/><path d="M702.500 662.200v10.800" stroke="#777" stroke-width="1"/><path d="M704.500 664.300v6.600" stroke="#777" stroke-width="1"/></svg><svg style="left:413px;top:701px" width="115" height="18" viewBox="413 701 115 18"><path d="M414 702.800h1.900v14.500h-1.900zM416.200 710l9.900-6.800v13.600z" fill="#4a4a4a"/><path d="M438.200 710l9.600-6.800v13.600zM449.100 706.900h2v6.600h-2z" fill="#4a4a4a"/><path d="M464.300 702.100l11.900 7.900-11.900 7.900z" fill="#4a4a4a"/><path d="M488 706.900h2v6.600h-2zM491.300 703.200l9.600 6.800-9.600 6.800z" fill="#4a4a4a"/><path d="M514.400 703.200l9.900 6.800-9.900 6.800zM524.300 702.800h1.900v14.500h-1.900z" fill="#4a4a4a"/></svg><svg style="left:548px;top:700px" width="18" height="22" viewBox="548 700 18 22"><rect x="550.300" y="702.600" width="12.200" height="12.200" fill="none" stroke="#444" stroke-width="1"/><rect x="549.1" y="701.4" width="2.2" height="2.2" fill="#0c87e8"/><rect x="561.5" y="701.4" width="2.2" height="2.2" fill="#0c87e8"/><rect x="549.1" y="713.8" width="2.2" height="2.2" fill="#0c87e8"/><path d="M557.600 715.700l5.200-6 1.800 1.600-5.200 6z" fill="#f6b73c"/><path d="M562.800 709.700l0.900-1 1.800 1.600-0.900 1z" fill="#e33"/><path d="M557.600 715.700l1.800 1.600-2.600 1z" fill="#555"/><path d="M557.800 720v2" stroke="#ccc" stroke-width="1.400"/></svg><svg style="left:562px;top:694px" width="14" height="28" viewBox="562 694 14 28"><path d="M562.900 695h12.100v3.200l-4.900 5.400v18.400h-2.200v-18.400l-5-5.400z" fill="#555"/></svg><svg style="left:1333px;top:700px" width="18" height="18" viewBox="1333 700 18 18"><path d="M1347.32 708.15L1349.78 708.03L1349.78 711.77L1347.32 711.65L1347.00 712.42L1348.82 714.08L1346.18 716.72L1344.52 714.90L1343.75 715.22L1343.87 717.68L1340.13 717.68L1340.25 715.22L1339.48 714.90L1337.82 716.72L1335.18 714.08L1337.00 712.42L1336.68 711.65L1334.22 711.77L1334.22 708.03L1336.68 708.15L1337.00 707.38L1335.18 705.72L1337.82 703.08L1339.48 704.90L1340.25 704.58L1340.13 702.12L1343.87 702.12L1343.75 704.58L1344.52 704.90L1346.18 703.08L1348.82 705.72L1347.00 707.38z" fill="#999"/><circle cx="1342" cy="709.9" r="2.9" fill="#f1f1f1"/></svg><svg style="left:766px;top:659px" width="19" height="18" viewBox="766 659 19 18"><ellipse cx="775.200" cy="669.100" rx="7.500" ry="2.500" fill="none" stroke="#222" stroke-width="1.300"/><path d="M775.400 660.200l2.700 3h-1.500v12.300h-2.400v-12.300h-1.500z" fill="#fff" stroke="#222" stroke-width="0.900"/><path d="M767.800 671.500l4-2.400v1.700h3v1.400h-3v1.700z" fill="#111"/></svg><svg style="left:788px;top:666px" width="8" height="6" viewBox="788 666 8 6"><path d="M788.2 666.1h5.8l-2.9 3.6z" fill="#222"/></svg><svg style="left:899px;top:666px" width="8" height="6" viewBox="899 666 8 6"><path d="M899.2 666.1h5.8l-2.9 3.6z" fill="#222"/></svg><svg style="left:929px;top:666px" width="8" height="6" viewBox="929 666 8 6"><path d="M929.2 666.1h5.8l-2.9 3.6z" fill="#222"/></svg><svg style="left:960px;top:666px" width="8" height="6" viewBox="960 666 8 6"><path d="M960.1 666.1h5.8l-2.9 3.6z" fill="#222"/></svg><svg style="left:991px;top:666px" width="8" height="6" viewBox="991 666 8 6"><path d="M991.1 666.1h5.8l-2.9 3.6z" fill="#222"/></svg><svg style="left:799px;top:659px" width="19" height="18" viewBox="799 659 19 18"><path d="M803.300 665.200l2.600-4.400 1.400 1.500 1.700-1 1.500 0.900 2.300-1v4z" fill="#999" stroke="#445" stroke-width="0.700"/><rect x="800.800" y="665.600" width="14.600" height="9.800" fill="#ececec" stroke="#3c4250" stroke-width="1.300"/><rect x="803.600" y="668.700" width="9" height="3.700" fill="#a8adbb" stroke="#3c4250" stroke-width="0.900"/></svg><svg style="left:825px;top:659px" width="19" height="18" viewBox="825 659 19 18"><defs><linearGradient id="hg" x1="0" y1="0" x2="0" y2="1"><stop offset="0.400" stop-color="#fff"/><stop offset="1" stop-color="#e4e7ec"/></linearGradient></defs><path d="M829.300 669.300V662.300a1.300 1.300 0 0 1 2.600 0V666h1.100V661.400a1.500 1.500 0 0 1 3 0V666h0.600V662.400a1.250 1.250 0 0 1 2.500 0V667h0.500V664.300a1.200 1.200 0 0 1 2.400 0V669.500c0 2.800-1.600 4.200-3.400 6.200H832.200L826.500 669.600c-1.100-1.300 0.300-2.500 1.600-1.700z" fill="url(#hg)" stroke="#262b36" stroke-width="1.100" stroke-linejoin="round"/></svg><svg style="left:851px;top:658px" width="19" height="19" viewBox="851 658 19 19"><defs><linearGradient id="lg" x1="0" y1="0" x2="0" y2="1"><stop offset="0" stop-color="#c4d8da"/><stop offset="1" stop-color="#fff"/></linearGradient></defs><path d="M860.200 670.400l3.600 3.300" stroke="#262b36" stroke-width="3" stroke-linecap="round"/><circle cx="856.800" cy="667" r="4.300" fill="url(#lg)" stroke="#2c313c" stroke-width="1.300"/><path d="M863.200 662.600h4.700M865.550 660.200v4.800M863.200 666.600h4.700" stroke="#222" stroke-width="1.200"/></svg><svg style="left:877px;top:659px" width="19" height="18" viewBox="877 659 19 18"><rect x="878.300" y="660.600" width="15.400" height="14.900" fill="none" stroke="#444" stroke-width="0.800" stroke-dasharray="2 1.500"/><path d="M889.400 670.900l3.800 3.700" stroke="#333" stroke-width="2.800" stroke-linecap="round"/><circle cx="884.800" cy="666.300" r="6.400" fill="url(#lg2)" stroke="#333" stroke-width="1.300"/><defs><linearGradient id="lg2" x1="0" y1="0" x2="0" y2="1"><stop offset="0" stop-color="#bcd4d6"/><stop offset="1" stop-color="#fff"/></linearGradient></defs></svg><svg style="left:910px;top:659px" width="19" height="18" viewBox="910 659 19 18"><rect x="911.700" y="660.600" width="14.800" height="12" rx="1.200" fill="#f4f4f4" stroke="#555" stroke-width="1.100"/><rect x="913.900" y="662.700" width="10.400" height="7.600" rx="0.800" fill="#9bb8e2" stroke="#26457e" stroke-width="1.300"/><path d="M916.300 673.300h5.700l1 2h-7.700z" fill="#eee" stroke="#555" stroke-width="0.800"/></svg><svg style="left:941px;top:659px" width="19" height="18" viewBox="941 659 19 18"><defs><linearGradient id="gg" x1="0" y1="0" x2="0" y2="1"><stop offset="0" stop-color="#55585f"/><stop offset="1" stop-color="#9a9fae"/></linearGradient></defs><rect x="942.100" y="660.100" width="15.800" height="15.700" rx="1.200" fill="url(#gg)"/><rect x="943.50" y="661.30" width="1.800" height="1.800" fill="#fff" fill-opacity="1.00"/><rect x="943.50" y="664.25" width="1.800" height="1.800" fill="#fff" fill-opacity="0.92"/><rect x="943.50" y="667.20" width="1.800" height="1.800" fill="#fff" fill-opacity="0.84"/><rect x="943.50" y="670.15" width="1.800" height="1.800" fill="#fff" fill-opacity="0.76"/><rect x="943.50" y="673.10" width="1.800" height="1.800" fill="#fff" fill-opacity="0.68"/><rect x="946.45" y="661.30" width="1.800" height="1.800" fill="#fff" fill-opacity="1.00"/><rect x="946.45" y="664.25" width="1.800" height="1.800" fill="#fff" fill-opacity="0.92"/><rect x="946.45" y="667.20" width="1.800" height="1.800" fill="#fff" fill-opacity="0.84"/><rect x="946.45" y="670.15" width="1.800" height="1.800" fill="#fff" fill-opacity="0.76"/><rect x="946.45" y="673.10" width="1.800" height="1.800" fill="#fff" fill-opacity="0.68"/><rect x="949.40" y="661.30" width="1.800" height="1.800" fill="#fff" fill-opacity="1.00"/><rect x="949.40" y="664.25" width="1.800" height="1.800" fill="#fff" fill-opacity="0.92"/><rect x="949.40" y="667.20" width="1.800" height="1.800" fill="#fff" fill-opacity="0.84"/><rect x="949.40" y="670.15" width="1.800" height="1.800" fill="#fff" fill-opacity="0.76"/><rect x="949.40" y="673.10" width="1.800" height="1.800" fill="#fff" fill-opacity="0.68"/><rect x="952.35" y="661.30" width="1.800" height="1.800" fill="#fff" fill-opacity="1.00"/><rect x="952.35" y="664.25" width="1.800" height="1.800" fill="#fff" fill-opacity="0.92"/><rect x="952.35" y="667.20" width="1.800" height="1.800" fill="#fff" fill-opacity="0.84"/><rect x="952.35" y="670.15" width="1.800" height="1.800" fill="#fff" fill-opacity="0.76"/><rect x="952.35" y="673.10" width="1.800" height="1.800" fill="#fff" fill-opacity="0.68"/><rect x="955.30" y="661.30" width="1.800" height="1.800" fill="#fff" fill-opacity="1.00"/><rect x="955.30" y="664.25" width="1.800" height="1.800" fill="#fff" fill-opacity="0.92"/><rect x="955.30" y="667.20" width="1.800" height="1.800" fill="#fff" fill-opacity="0.84"/><rect x="955.30" y="670.15" width="1.800" height="1.800" fill="#fff" fill-opacity="0.76"/><rect x="955.30" y="673.10" width="1.800" height="1.800" fill="#fff" fill-opacity="0.68"/></svg><svg style="left:972px;top:660px" width="18" height="16" viewBox="972 660 18 16"><rect x="973.6" y="661.6" width="6.800" height="5.900" rx="0.800" fill="#8ca9d9" stroke="#2a4a86" stroke-width="1.050"/><rect x="975.3" y="663.1" width="3.400" height="2.800" fill="#b2c7ea"/><rect x="973.6" y="668.2" width="6.800" height="5.900" rx="0.800" fill="#8ca9d9" stroke="#2a4a86" stroke-width="1.050"/><rect x="975.3" y="669.7" width="3.400" height="2.800" fill="#b2c7ea"/><rect x="981.0" y="661.6" width="6.800" height="5.900" rx="0.800" fill="#8ca9d9" stroke="#2a4a86" stroke-width="1.050"/><rect x="982.7" y="663.1" width="3.400" height="2.800" fill="#b2c7ea"/><rect x="981.0" y="668.2" width="6.800" height="5.900" rx="0.800" fill="#8ca9d9" stroke="#2a4a86" stroke-width="1.050"/><rect x="982.7" y="669.7" width="3.400" height="2.800" fill="#b2c7ea"/></svg><svg style="left:1120px;top:201px" width="11" height="11" viewBox="1120 201 11 11"><circle cx="1125.400" cy="206.500" r="4.600" fill="#222"/><path d="M1122.900 206.500h5" stroke="#f2f2f2" stroke-width="1.200"/></svg><svg style="left:1216px;top:224px" width="14" height="20" viewBox="1216 224 14 20"><path d="M1218.4 226.4v12.300l2.900-2.500 2.200 4.900 2-0.900-2.200-4.800 4-0.300z" fill="#d9dde5" stroke="#3a3a3a" stroke-width="1.100" stroke-linejoin="round"/></svg><svg style="left:1216px;top:254px" width="14" height="20" viewBox="1216 254 14 20"><path d="M1218.4 256.7v12.300l2.900-2.500 2.200 4.900 2-0.900-2.200-4.800 4-0.300z" fill="#dde1e8" stroke="#333" stroke-width="1.100" stroke-linejoin="round"/></svg><svg style="left:1320px;top:228px" width="12" height="12" viewBox="1320 228 12 12"><path d="M1323.1 230.5l7.400 7.400M1330.5 230.5l-7.400 7.400" stroke="#444" stroke-width="1.900"/></svg><svg style="left:1320px;top:258px" width="12" height="12" viewBox="1320 258 12 12"><path d="M1323.1 260.3l7.400 7.400M1330.5 260.3l-7.400 7.400" stroke="#444" stroke-width="1.900"/></svg><svg style="left:1123px;top:319px" width="14" height="14" viewBox="1123 319 14 14"><circle cx="1130" cy="325.950" r="6.100" fill="#000"/><rect x="1129" y="322" width="2" height="2" fill="#fff"/><path d="M1128.300 325.200h2.900v3.600h0.800v1.300h-3.900v-1.300h0.900v-2.300h-0.700z" fill="#fff"/></svg><div style="left:1364px;top:31px;width:2px;height:163px;background:#c6c6c6"></div><div style="left:1364px;top:344px;width:2px;height:378px;background:#c6c6c6"></div><div style="left:1363px;top:1px;width:3px;height:30px;background:linear-gradient(90deg,#e8e8e8,#b4b4b4)"></div><div style="left:1363px;top:385px;width:2px;height:26px;background:#a8a8a8"></div><div style="left:0;top:103px;width:1px;height:568px;background:#0a0a0a"></div><div style="left:0;top:671px;width:1px;height:51px;background:#f2f2f2"></div></div></body></html>
